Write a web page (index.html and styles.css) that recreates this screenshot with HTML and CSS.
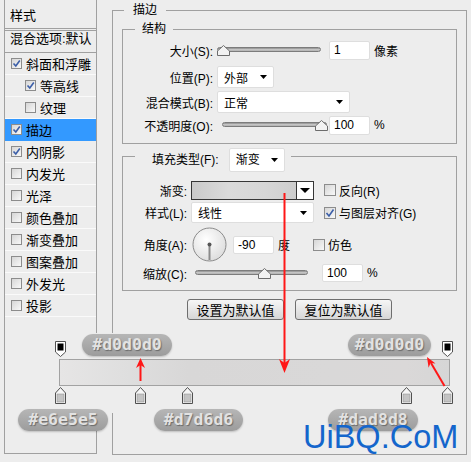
FILE: index.html
```html
<!DOCTYPE html>
<html>
	<head>
		<meta charset="utf-8">
		<title>图层样式 - 描边</title>
		<link rel="stylesheet" href="styles.css">
	</head>
	<body>

		<div class="dialog">

			<!-- left: style list -->
			<ul class="style-list">
				<li class="list-head">样式</li>
				<li class="list-blend">混合选项:默认</li>
				<li class="list-item"><span class="check"><svg width="9" height="9"><path d="M1.5 4.5 L3.8 7 L7.8 1.5" /></svg></span>斜面和浮雕</li>
				<li class="list-item sub"><span class="check"><svg width="9" height="9"><path d="M1.5 4.5 L3.8 7 L7.8 1.5" /></svg></span>等高线</li>
				<li class="list-item sub"><span class="check"></span>纹理</li>
				<li class="list-item active"><span class="check"><svg width="9" height="9"><path d="M1.5 4.5 L3.8 7 L7.8 1.5" /></svg></span>描边</li>
				<li class="list-item"><span class="check"><svg width="9" height="9"><path d="M1.5 4.5 L3.8 7 L7.8 1.5" /></svg></span>内阴影</li>
				<li class="list-item"><span class="check"></span>内发光</li>
				<li class="list-item"><span class="check"></span>光泽</li>
				<li class="list-item"><span class="check"></span>颜色叠加</li>
				<li class="list-item"><span class="check"></span>渐变叠加</li>
				<li class="list-item"><span class="check"></span>图案叠加</li>
				<li class="list-item"><span class="check"></span>外发光</li>
				<li class="list-item"><span class="check"></span>投影</li>
			</ul>

			<!-- right: stroke settings -->
			<div class="group stroke-group">
				<div class="group-title stroke-title">描边</div>

				<div class="group struct">
					<div class="group-title struct-title">结构</div>

					<div class="row row-size">
						<span class="label">大小(S):</span>
						<div class="slider size-slider">
							<div class="track"></div>
							<svg class="thumb" style="left:0%" width="13" height="11"><path d="M0.5 10.5 V6 L6.5 0.5 L12.5 6 V10.5 Z" /></svg>
						</div>
						<span class="field size-field">1</span>
						<span class="unit">像素</span>
					</div>

					<div class="row row-pos">
						<span class="label">位置(P):</span>
						<div class="select pos-select">外部<svg width="7" height="4"><path d="M0 0 H7 L3.5 4 Z" /></svg></div>
					</div>

					<div class="row row-blend">
						<span class="label">混合模式(B):</span>
						<div class="select blend-select">正常<svg width="7" height="4"><path d="M0 0 H7 L3.5 4 Z" /></svg></div>
					</div>

					<div class="row row-opacity">
						<span class="label">不透明度(O):</span>
						<div class="slider opacity-slider">
							<div class="track"></div>
							<svg class="thumb" style="left:calc(100% - 12px)" width="13" height="11"><path d="M0.5 10.5 V6 L6.5 0.5 L12.5 6 V10.5 Z" /></svg>
						</div>
						<span class="field opacity-field">100</span>
						<span class="unit">%</span>
					</div>
				</div>

				<div class="group fill">
					<div class="group-title fill-title">
						<span>填充类型(F):</span>
						<div class="select type-select">渐变<svg width="7" height="4"><path d="M0 0 H7 L3.5 4 Z" /></svg></div>
					</div>

					<div class="row row-grad">
						<span class="label fill-label">渐变:</span>
						<div class="swatch">
							<div class="swatch-fill"></div>
							<div class="swatch-btn"><svg width="10" height="5"><path d="M0 0 H10 L5 5 Z" /></svg></div>
						</div>
						<span class="box"></span>
						<span class="box-text">反向(R)</span>
					</div>

					<div class="row row-style">
						<span class="label fill-label">样式(L):</span>
						<div class="select style-select">线性<svg width="7" height="4"><path d="M0 0 H7 L3.5 4 Z" /></svg></div>
						<span class="box"><svg width="10" height="10"><path d="M1.5 5 L4 8 L8.5 1.5" /></svg></span>
						<span class="box-text">与图层对齐(G)</span>
					</div>

					<div class="row row-angle">
						<span class="label fill-label">角度(A):</span>
						<svg class="dial" width="35" height="35" viewBox="0 0 35 35">
							<defs>
								<radialGradient id="dialfill" cx="40%" cy="35%" r="70%">
									<stop offset="0" stop-color="#ffffff"/>
									<stop offset="1" stop-color="#dcdcdc"/>
								</radialGradient>
							</defs>
							<circle cx="17.5" cy="17.5" r="16.5" fill="url(#dialfill)" stroke="#8a8a8a"/>
							<line x1="17.5" y1="17.5" x2="17.5" y2="33" stroke="#8a8a8a" stroke-width="2"/>
							<circle cx="17.5" cy="17.5" r="2" fill="#555"/>
						</svg>
						<span class="field angle-field">-90</span>
						<span class="unit">度</span>
						<span class="box dither-box"></span>
						<span class="box-text">仿色</span>
					</div>

					<div class="row row-scale">
						<span class="label fill-label">缩放(C):</span>
						<div class="slider scale-slider">
							<div class="track"></div>
							<svg class="thumb" style="left:56%" width="13" height="11"><path d="M0.5 10.5 V6 L6.5 0.5 L12.5 6 V10.5 Z" /></svg>
						</div>
						<span class="field scale-field">100</span>
						<span class="unit">%</span>
					</div>
				</div>

				<div class="buttons">
					<span class="btn">设置为默认值</span>
					<span class="btn">复位为默认值</span>
				</div>
			</div>

		</div>

		<!-- gradient editor annotation pasted over the dialog -->
		<div class="annot">
			<div class="ramp"></div>

			<svg class="stop-top" style="left:45px" width="11" height="16"><path d="M0.5 0.5 H10.5 V11 L5.5 15.5 L0.5 11 Z" /><rect x="2.5" y="2.5" width="6" height="7" /></svg>
			<svg class="stop-top" style="left:432px" width="11" height="16"><path d="M0.5 0.5 H10.5 V11 L5.5 15.5 L0.5 11 Z" /><rect x="2.5" y="2.5" width="6" height="7" /></svg>

			<svg class="stop-bottom" style="left:45px" width="11" height="17"><path d="M0.5 16.5 V6 L5.5 0.5 L10.5 6 V16.5 Z" /><rect x="2" y="7" width="7" height="8" /></svg>
			<svg class="stop-bottom" style="left:125px" width="11" height="17"><path d="M0.5 16.5 V6 L5.5 0.5 L10.5 6 V16.5 Z" /><rect x="2" y="7" width="7" height="8" /></svg>
			<svg class="stop-bottom" style="left:172px" width="11" height="17"><path d="M0.5 16.5 V6 L5.5 0.5 L10.5 6 V16.5 Z" /><rect x="2" y="7" width="7" height="8" /></svg>
			<svg class="stop-bottom" style="left:391px" width="11" height="17"><path d="M0.5 16.5 V6 L5.5 0.5 L10.5 6 V16.5 Z" /><rect x="2" y="7" width="7" height="8" /></svg>
			<svg class="stop-bottom" style="left:432px" width="11" height="17"><path d="M0.5 16.5 V6 L5.5 0.5 L10.5 6 V16.5 Z" /><rect x="2" y="7" width="7" height="8" /></svg>

			<span class="pill" style="left:72px;top:1px;width:90px">#d0d0d0</span>
			<span class="pill" style="left:338px;top:1px;width:83px">#d0d0d0</span>
			<span class="pill" style="left:8px;top:76px;width:90px">#e6e5e5</span>
			<span class="pill" style="left:144px;top:76px;width:89px">#d7d6d6</span>
			<span class="pill" style="left:318px;top:76px;width:90px">#dad8d8</span>
		</div>

		<!-- red arrows -->
		<svg class="arrows" width="471" height="462">
			<line x1="284.5" y1="193" x2="284.5" y2="365" />
			<polygon points="284.5,373 279,359 284.5,363 290,359" />
			<line x1="140.5" y1="381" x2="140.5" y2="364" />
			<polygon points="140.5,358 136,368 140.5,365 145,368" />
			<line x1="444.5" y1="386" x2="431" y2="363" />
			<polygon points="427,357 435.5,363.6 430.5,363 428.6,367.7" />
		</svg>

		<span class="watermark">UiBQ.CoM</span>

	</body>
</html>
```

FILE: styles.css
```css
*{
	box-sizing: border-box;
}
html, body{
	margin:0;
	padding:0;
}
body{
	width:471px;
	height:462px;
	position:relative;
	overflow:hidden;
	background-color:#ededed;
	color:#000;
	font-family:"Liberation Sans", "Noto Sans CJK SC", sans-serif;
	font-size:12px;
}

.dialog{
	display:flex;
	align-items:flex-start;
	padding-left:4px;
}

/* ---------- style list ---------- */

.style-list{
	list-style:none;
	margin:0;
	padding:0;
	width:93px;
	height:454px;
	border:1px solid #a0a0a0;
	border-top:none;
	flex-shrink:0;
	font-size:13px;
}
.list-head{
	height:31px;
	padding:8px 0 0 5px;
	line-height:16px;
	border-bottom:3px double #a0a0a0;
}
.list-blend{
	height:22px;
	padding:0 0 0 5px;
	line-height:16px;
	border-bottom:1px solid #a0a0a0;
}
.list-item{
	display:flex;
	align-items:center;
	height:22px;
	padding-left:6px;
	border-bottom:1px solid #fafafa;
}
.list-item.sub{
	padding-left:20px;
}
.list-item.active{
	background-color:#3399ff;
	border-bottom-color:#3399ff;
}

.check{
	display:inline-flex;
	flex-shrink:0;
	width:11px;
	height:11px;
	margin-right:4px;
	border:1px solid #8c8c8c;
	background:linear-gradient(135deg, #d6d6d6, #f8f8f8);
}
.check path, .box path{
	fill:none;
	stroke:#3b5ea8;
	stroke-width:1.6;
}

/* ---------- groups ---------- */

.group{
	border:1px solid #a0a0a0;
}
.group-title{
	width:fit-content;
	margin:-9px 0 0 11px;
	padding:0 9px;
	line-height:16px;
	background-color:#ededed;
}

.stroke-group{
	margin:10px 0 0 15px;
	width:355px;
	height:445px;
}
.struct{
	margin:11px 0 0 9px;
	width:335px;
	height:115px;
}
.struct-title{
	margin-left:12px;
	padding:0 7px;
}
.fill{
	margin:12px 0 0 9px;
	width:335px;
	height:135px;
}
.fill-title{
	display:flex;
	align-items:center;
	height:24px;
	margin-left:12px;
	padding:0 6px 0 17px;
}

/* ---------- rows ---------- */

.row{
	display:flex;
	align-items:center;
	height:22px;
}
.label{
	width:90px;
	flex-shrink:0;
	text-align:right;
	white-space:nowrap;
}
.fill-label{
	width:64px;
}

.row-size{ margin-top:2px; }
.row-pos{ margin-top:5px; }
.row-blend{ margin-top:3px; }
.row-opacity{ margin-top:1px; }

.row-grad{ margin-top:8px; height:20px; }
.row-style{ margin-top:2px; height:21px; }
.row-angle{ margin-top:4px; height:35px; }
.row-scale{ margin-top:2px; height:18px; }

/* ---------- controls ---------- */

.slider{
	position:relative;
	height:11px;
}
.track{
	margin-top:2px;
	height:5px;
	border:1px solid #7c7c7c;
	border-radius:3px;
	background:linear-gradient(#8c8c8c, #cfcfcf 60%, #a8a8a8);
}
.thumb{
	position:absolute;
	top:0;
}
.thumb path{
	fill:#f2f2f2;
	stroke:#6c6c6c;
}
.size-slider{
	margin-left:4px;
	width:104px;
}
.opacity-slider{
	margin-left:9px;
	width:105px;
}
.scale-slider{
	margin-left:8px;
	width:113px;
}

.field{
	display:flex;
	align-items:center;
	height:19px;
	width:41px;
	padding-left:4px;
	background-color:#fff;
	border:1px solid #dedede;
	border-radius:2px;
	font-size:12px;
}
.size-field{ margin-left:8px; }
.opacity-field{ margin-left:2px; }
.angle-field{ margin-left:6px; height:18px; }
.scale-field{ margin-left:14px; height:18px; }

.unit{
	margin-left:4px;
}

.select{
	display:flex;
	align-items:center;
	justify-content:space-between;
	height:22px;
	padding:0 6px 0 6px;
	background-color:#fff;
	border:1px solid #dedede;
	border-radius:2px;
}
.select path, .swatch-btn path{
	fill:#000;
}
.pos-select{
	margin-left:4px;
	width:57px;
}
.blend-select{
	margin-left:4px;
	width:133px;
}
.type-select{
	margin-left:10px;
	width:56px;
	height:24px;
}
.style-select{
	margin-left:4px;
	width:123px;
	height:21px;
}

.swatch{
	display:flex;
	margin-left:4px;
	width:123px;
	height:19px;
	border:1px solid #363636;
}
.swatch-fill{
	flex:1;
	background:linear-gradient(90deg, #cacaca, #dadada 35%, #d6d6d6 70%, #cecece);
}
.swatch-btn{
	display:flex;
	align-items:center;
	justify-content:center;
	width:17px;
	border-left:1px solid #363636;
	background-color:#fff;
}

.box{
	display:inline-flex;
	align-items:center;
	justify-content:center;
	width:12px;
	height:12px;
	margin-left:10px;
	border:1px solid #8c8c8c;
	background:linear-gradient(135deg, #d6d6d6, #f8f8f8);
}
.dither-box{
	margin-left:23px;
}
.box-text{
	margin-left:3px;
	white-space:nowrap;
}

.dial{
	margin-left:5px;
	flex-shrink:0;
}

.buttons{
	display:flex;
	gap:11px;
	margin:8px 0 0 74px;
}
.btn{
	display:flex;
	align-items:center;
	justify-content:center;
	width:97px;
	height:21px;
	border:1px solid #6e6e6e;
	border-radius:3px;
	background:linear-gradient(#f6f6f6, #d6d6d6);
	font-size:13px;
}

/* ---------- gradient annotation ---------- */

.annot{
	position:absolute;
	left:10px;
	top:333px;
	width:452px;
	height:80px;
	background-color:#ededed;
}
.ramp{
	position:absolute;
	left:49px;
	top:26px;
	width:391px;
	height:27px;
	border:1px solid #a2a2a2;
	background:linear-gradient(90deg, #e6e5e5 0%, #dedede 18%, #d8d7d7 33%, #d9d8d8 70%, #dad8d8 89%, #d6d6d6 100%);
}
.stop-top, .stop-bottom{
	position:absolute;
}
.stop-top{
	top:8px;
}
.stop-top path{
	fill:#fff;
	stroke:#505050;
}
.stop-top rect{
	fill:#000;
}
.stop-bottom{
	top:54px;
}
.stop-bottom path{
	fill:#f6f6f6;
	stroke:#505050;
}
.stop-bottom rect{
	fill:#c4c4c4;
	stroke:#8a8a8a;
	stroke-width:0.5;
}
.pill{
	position:absolute;
	height:22px;
	border-radius:11px;
	background:linear-gradient(#b6b6b6, #9c9c9c);
	box-shadow:0 1px 2px rgba(0,0,0,0.2);
	color:#e2e2e2;
	font-family:"DejaVu Sans Mono", monospace;
	font-weight:bold;
	font-size:16.5px;
	line-height:22px;
	text-align:center;
	text-shadow:1px 1px 1px rgba(0,0,0,0.35);
}

.arrows{
	position:absolute;
	left:0;
	top:0;
}
.arrows line{
	stroke:#ff1717;
	stroke-width:2;
}
.arrows polygon{
	fill:#ff1717;
}

.watermark{
	position:absolute;
	left:303px;
	top:421px;
	color:#1466cc;
	font-family:"Liberation Sans", sans-serif;
	font-size:32.5px;
	line-height:33px;
}
```
